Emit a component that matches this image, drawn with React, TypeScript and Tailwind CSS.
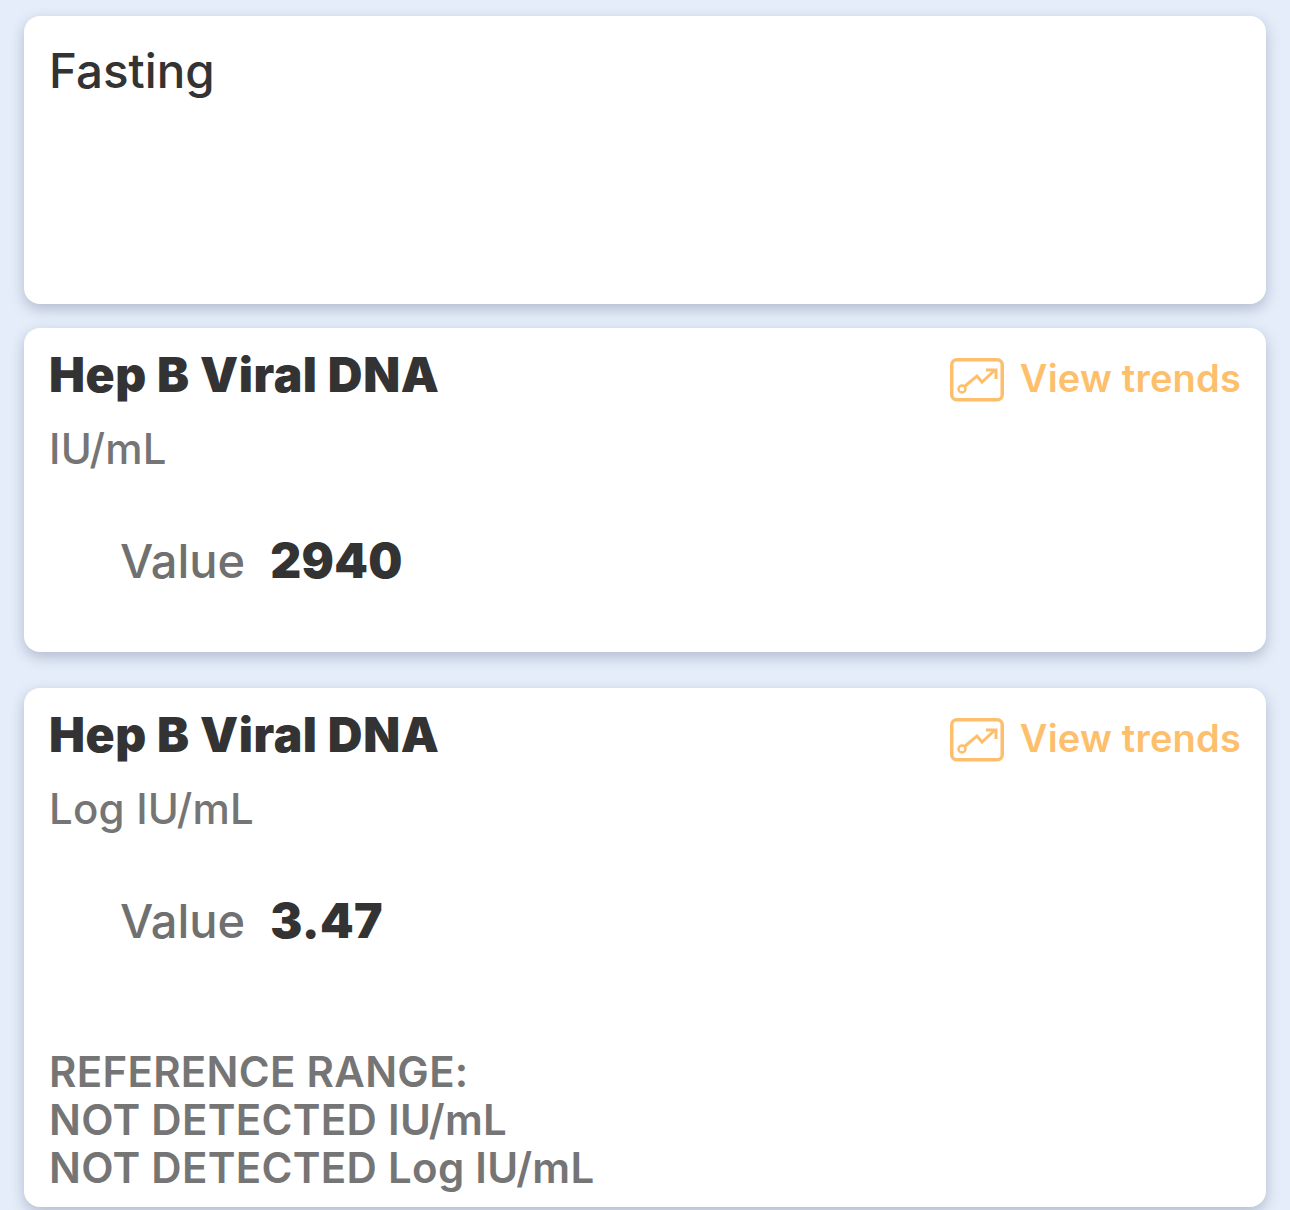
function TrendIcon() {
  return (
    <svg width="54" height="44" viewBox="0 0 54 44" fill="none" stroke="#fdbf6c" strokeWidth="3.5" className="shrink-0">
      <rect x="1.75" y="1.75" width="50.5" height="40" rx="5" />
      <circle cx="12" cy="31" r="3.5" strokeWidth="2.5" />
      <path d="M15 28 L27 18 L32 24 L45 12" strokeWidth="3" />
      <path d="M36 12 H46 V21" strokeWidth="3" />
    </svg>
  );
}

function Result({ unit, value, range }: { unit: string; value: string; range?: string[] }) {
  return (
    <div className="bg-white rounded-2xl shadow-[0_5px_14px_rgba(70,85,115,0.32)] px-[25px] pt-[18px]">
      <div className="flex justify-between items-start">
        <h2 className="text-[48px] leading-[58px] tracking-[0.6px] font-black text-[#333333]">Hep B Viral DNA</h2>
        <div className="flex items-start gap-[16px] mt-[12px]">
          <TrendIcon />
          <span className="text-[38px] leading-[40px] font-semibold tracking-[0.2px] text-[#fdbf6c]">View trends</span>
        </div>
      </div>
      <p className="text-[42px] leading-[48px] mt-[21px] tracking-[0.2px] font-medium text-[#757575]">{unit}</p>
      <div className="flex items-center gap-[25px] pl-[71px] mt-[60px]">
        <span className="text-[47px] leading-[56px] font-medium text-[#707070]">Value</span>
        <span className="text-[48px] leading-[56px] tracking-[0.3px] font-black text-[#333333]">{value}</span>
      </div>
      {range ? (
        <div className="mt-[99px] pb-[15px] text-[42px] leading-[48px] tracking-[0.3px] font-semibold text-[#757575]">
          {range.map((line) => (
            <p key={line}>{line}</p>
          ))}
        </div>
      ) : (
        <div className="h-[63px]" />
      )}
    </div>
  );
}

export default function App() {
  return (
    <div className="h-[1210px] overflow-hidden bg-[#e5edfa] px-6 pt-4 font-['Inter',sans-serif]">
      <div className="bg-white rounded-2xl shadow-[0_5px_14px_rgba(70,85,115,0.32)] h-[288px] px-[25px] pt-[26px]">
        <h2 className="text-[47.5px] leading-[58px] font-medium text-[#333333]">Fasting</h2>
      </div>
      <div className="mt-6">
        <Result unit="IU/mL" value="2940" />
      </div>
      <div className="mt-9">
        <Result
          unit="Log IU/mL"
          value="3.47"
          range={["REFERENCE RANGE:", "NOT DETECTED IU/mL", "NOT DETECTED Log IU/mL"]}
        />
      </div>
    </div>
  );
}
